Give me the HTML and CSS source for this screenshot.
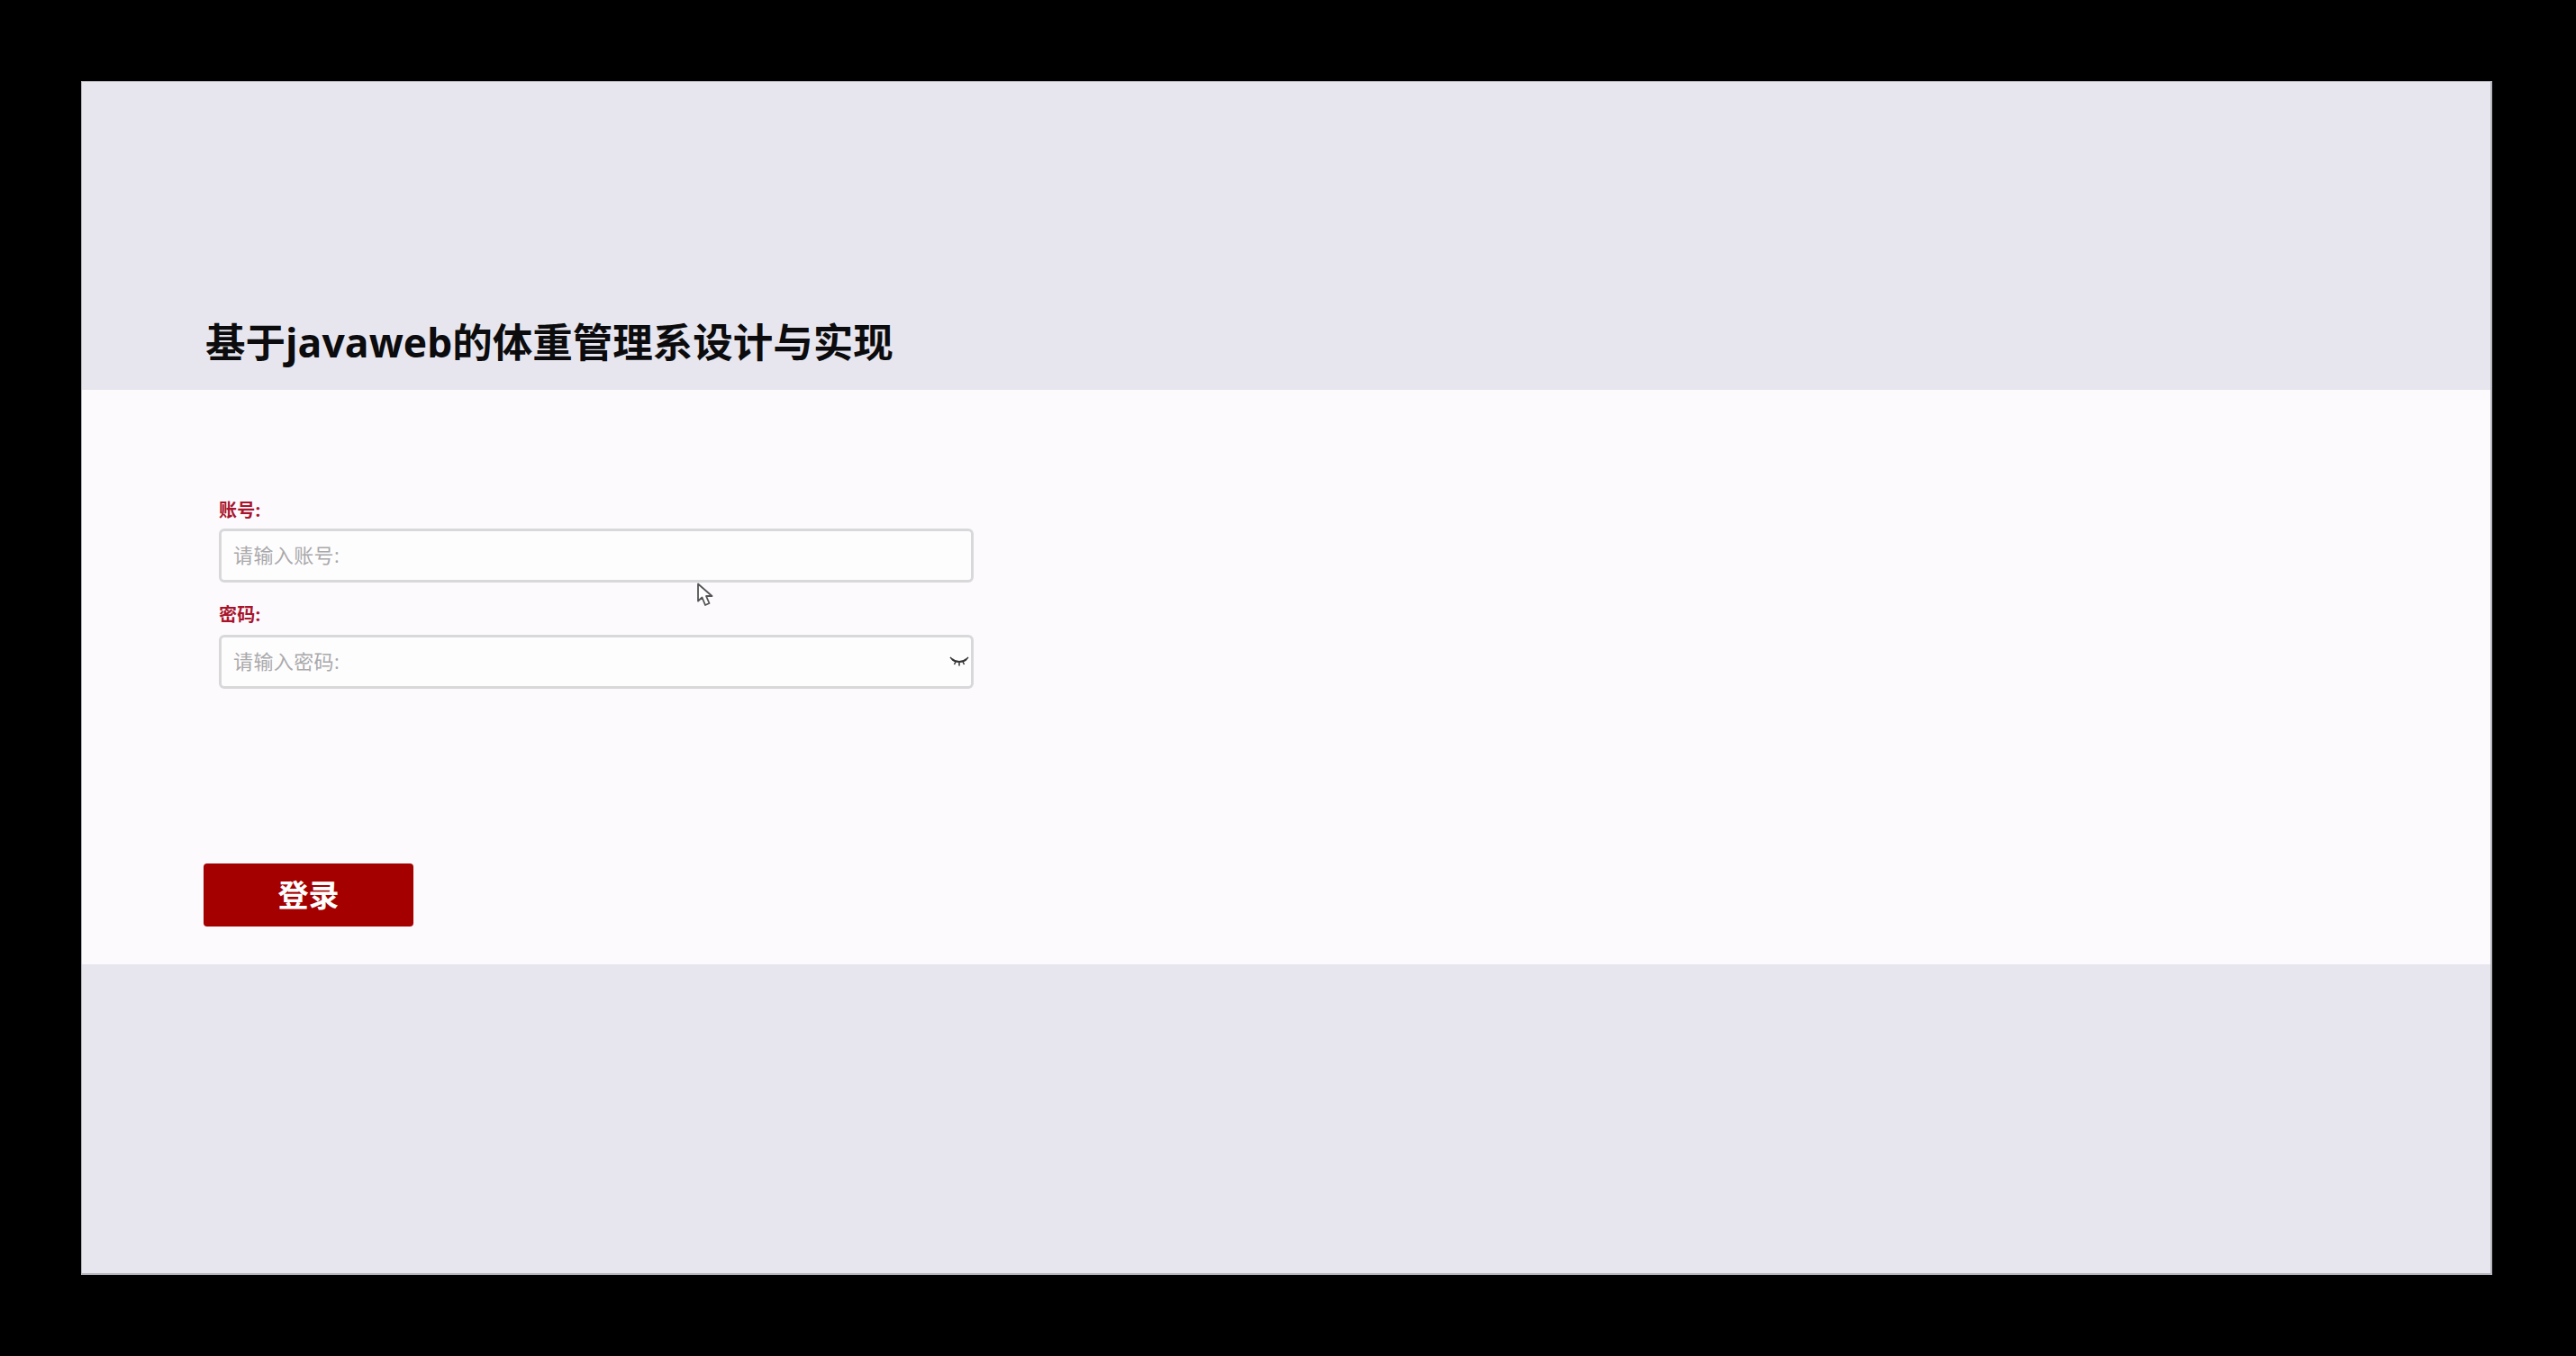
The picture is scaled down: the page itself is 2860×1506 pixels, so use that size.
FILE: index.html
```html
<!DOCTYPE html>
<html>
  <head>
    <meta charset="utf-8">
    <title>基于javaweb的体重管理系设计与实现</title>
    <link rel="stylesheet" href="styles.css">
  </head>
  <body>
    <div class="screen">
      <header class="top">
        <h1 class="title">基于javaweb的体重管理系设计与实现</h1>
      </header>
      <section class="login">
        <form class="form">
          <div class="field">
            <label class="field-label">账号:</label>
            <div class="field-box">
              <input class="field-input" type="text" placeholder="请输入账号:">
              <svg class="cursor" width="20" height="28" viewBox="0 0 20 28">
                <path d="M2 1.5V20.5L6.5 16.5L10 25L14.5 23L11 15H17.5Z" fill="#fff" stroke="#555" stroke-width="1.8" stroke-linejoin="round"/>
              </svg>
            </div>
          </div>
          <div class="field">
            <label class="field-label">密码:</label>
            <div class="field-box">
              <input class="field-input" type="password" placeholder="请输入密码:">
              <svg class="eye" width="22" height="12" viewBox="0 0 22 12">
                <path d="M3 3C7 7 15 7 19 3" fill="none" stroke="#333" stroke-width="2"/>
                <path d="M1 1L4 4M21 1L18 4M7 6L5.5 9M11 7V10.500M15 6L16.500 9" fill="none" stroke="#333" stroke-width="1.500"/>
              </svg>
            </div>
          </div>
        </form>
        <button class="button" type="button">登录</button>
      </section>
      <div class="bottom"></div>
    </div>
  </body>
</html>
```

FILE: styles.css
```css
html {
  height: 100%;
  box-sizing: border-box;
  background-color: #000;
}

*, *:before, *:after {
  box-sizing: inherit;
}

body {
  margin: 0;
  height: 100%;
  padding: 90px 93px 90px 90px;
  font-family: "Open Sans", "Noto Sans CJK SC", sans-serif;
}

.screen {
  display: flex;
  flex-direction: column;
  height: 100%;
  border: 1px solid #b4b4bc;
  border-width: 1px 2px 2px 1px;
  background-color: #e7e6ef;
}

.top {
  display: flex;
  align-items: flex-end;
  height: 342px;
  padding: 0 0 22px 137px;
}

.title {
  margin: 0;
  font-size: 44.5px;
  line-height: 62px;
  font-weight: 700;
  color: #0c0c0e;
}

.login {
  height: 638px;
  padding: 121px 0 0 135px;
  background-color: #fcfafd;
}

.form {
  display: flex;
  flex-direction: column;
  gap: 23px;
  width: 855px;
  padding-left: 17px;
}

.field-label {
  display: block;
  height: 35px;
  font-size: 20px;
  line-height: 26px;
  font-weight: 700;
  letter-spacing: 0.3px;
  color: #a8142c;
}

.field:first-child .field-label {
  height: 33px;
}

.field-box {
  position: relative;
}

.field-input {
  display: block;
  width: 100%;
  height: 60px;
  padding: 0 13px 2px;
  border: 3px solid #d8d8da;
  border-radius: 6px;
  outline: none;
  background-color: #fefdfe;
  font-family: inherit;
  font-size: 22px;
  letter-spacing: 0.4px;
}

.field-input::placeholder {
  color: #a9a9ab;
}

.eye {
  position: absolute;
  top: 24px;
  right: 5px;
}

.cursor {
  position: absolute;
  top: 60px;
  left: 530px;
}

.button {
  display: block;
  width: 233px;
  height: 70px;
  margin-top: 194px;
  padding: 0 0 3px;
  border: 0;
  border-radius: 4px;
  background-color: #a50000;
  color: #fff;
  font-family: inherit;
  font-size: 34px;
  font-weight: 700;
}

.bottom {
  flex: 1;
}
```
